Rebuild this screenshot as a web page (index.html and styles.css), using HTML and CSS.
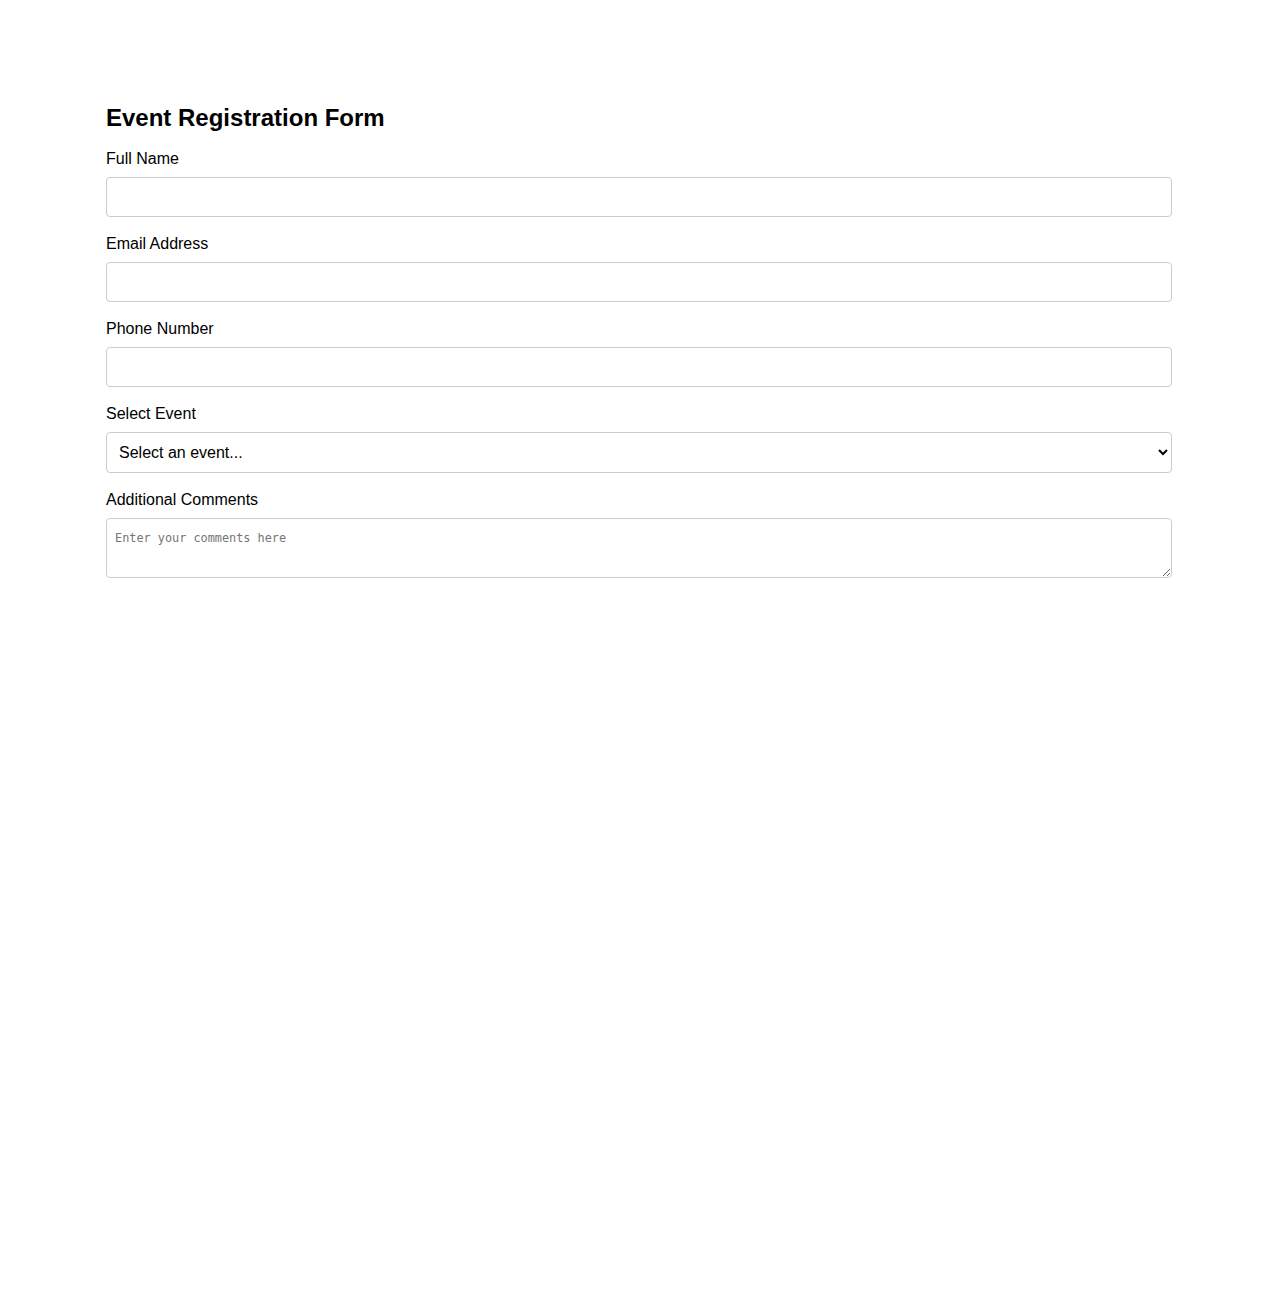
FILE: index.html
```html
<!DOCTYPE html>
<html lang="en">

<head>
	<meta charset="UTF-8">
	<meta name="viewport" content="width=device-width, initial-scale=1.0">
	<title>Event Registration</title>
	<link rel="stylesheet" href="styles.css">
</head>

<body>
	<div class="container">
		<h2>Event Registration Form</h2>
		<form id="registrationForm">
			<div class="form-group">
				<label for="fullName">Full Name</label>
				<input type="text" id="fullName" />
			</div>

			<div class="form-group">
				<label for="email">Email Address</label>
				<input type="email" id="email" />
			</div>

			<div class="form-group">
				<label for="phone">Phone Number</label>
				<input type="tel" id="phone" />
			</div>

			<div class="form-group">
				<label for="event">Select Event</label>
				<select id="event">
					<option value="" selected>Select an event...</option>
					<option value="conference">Annual Conference</option>
					<option value="workshop">Workshop</option>
					<option value="meetup">Networking Meetup</option>
				</select>
			</div>

			<div class="form-group">
				<label for="comments">Additional Comments</label>
				<textarea id="comments" rows="3" placeholder="Enter your comments here"></textarea>
			</div>
		</form>
	</div>
</body>

</html>
```

FILE: styles.css
```css
* {
	box-sizing: border-box;
}

body {
	font-family: 'Liberation Sans', Arial, sans-serif;
	background-color: #fff;
	color: #000;
	margin: 0;
}

.container {
	max-width: 1066px;
	margin: 0 auto;
	padding-top: 85px;
}

h2 {
	font-size: 24px;
	font-weight: 700;
	margin: 19px 0 18px;
}

.form-group {
	margin-bottom: 18px;
}

.form-group label {
	display: block;
	font-size: 16px;
	margin-bottom: 9px;
}

.form-group input,
.form-group select {
	display: block;
	width: 100%;
	padding: 10px;
	font-size: 16px;
	font-family: 'Liberation Sans', Arial, sans-serif;
	border: 1px solid #ccc;
	border-radius: 4px;
	background-color: #fff;
	color: #000;
}

.form-group select {
	padding-left: 8px;
}

.form-group textarea {
	display: block;
	width: 100%;
	height: 60px;
	padding: 12px 8px 8px;
	font-size: 11.85px;
	font-family: 'DejaVu Sans Mono', monospace;
	border: 1px solid #ccc;
	border-radius: 4px;
}

.form-group textarea::placeholder {
	color: #757575;
}
```
